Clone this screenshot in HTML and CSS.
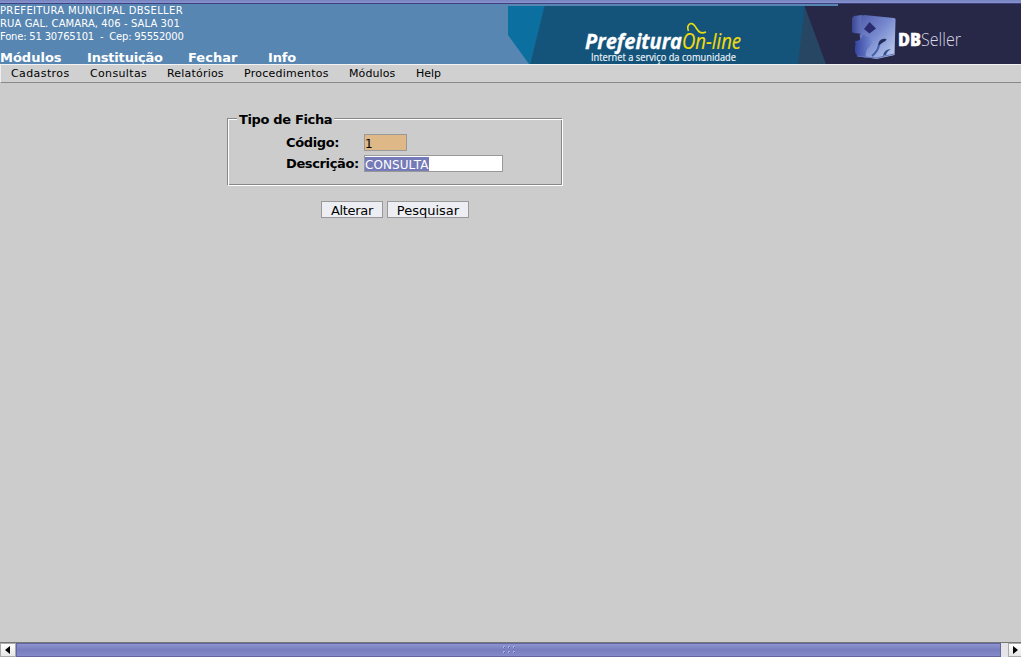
FILE: index.html
```html
<!DOCTYPE html>
<html lang="pt-BR">
<head>
<meta charset="utf-8">
<title>Prefeitura On-line</title>
<link rel="stylesheet" href="styles.css">
</head>
<body>
<div class="top-edge"></div>
<header class="header">
  <div class="account">
    <div class="address">
      <div class="l1">PREFEITURA MUNICIPAL DBSELLER</div>
      <div class="l2">RUA GAL. CAMARA, 406 - SALA 301</div>
      <div class="l3">Fone: 51 30765101 &nbsp;-&nbsp; Cep: 95552000</div>
    </div>
    <nav class="main-nav"><a class="n1">Módulos</a><a class="n2">Instituição</a><a class="n3">Fechar</a><a class="n4">Info</a></nav>
  </div>
  <svg class="banner" width="513" height="60" viewBox="508 4 513 60">
    <defs>
      <linearGradient id="cube" x1="0" y1="0" x2="1" y2="1"><stop offset="0" stop-color="#4d59a8"/><stop offset=".45" stop-color="#7587cd"/><stop offset="1" stop-color="#c3d4f2"/></linearGradient>
      <linearGradient id="arm" x1="0" y1="0" x2="1" y2="0"><stop offset="0" stop-color="#3c4794"/><stop offset="1" stop-color="#6675be"/></linearGradient>
      <linearGradient id="side" x1="0" y1="0" x2="1" y2="0"><stop offset="0" stop-color="#3444a0"/><stop offset="1" stop-color="#7c90d6"/></linearGradient>
    </defs>
    <path fill="#0b6fa0" d="M508 6h37l-15 58h-1L508 35z"/>
    <path fill="#14547b" d="M544.500 6H806l-4 58H530z"/>
    <path fill="#264663" d="M805 6l22 58h-29z"/>
    <path fill="#272748" d="M838 4h183v60H826L804.500 6H838z"/>
    <text class="brand" x="585" y="49" textLength="97" lengthAdjust="spacingAndGlyphs">Prefeitura</text>
    <text class="online" x="682" y="49" textLength="59" lengthAdjust="spacingAndGlyphs">On-line</text>
    <path fill="none" stroke="#f1dc0b" stroke-width="1.600" d="M688.500 31C686 25 691 21 694.500 25.500S699 35 706 32"/>
    <text class="tagline" x="591" y="61" textLength="145" lengthAdjust="spacingAndGlyphs">Internet a serviço da comunidade</text>
    <path fill="url(#arm)" d="M852 18l2-2 8-1v19l-8-1q-2 0-2-2z"/>
    <path fill="url(#cube)" d="M861 16l3-1 30 3q2 0 1.500 3l-1 34-18 4-18-3q-3-4 0-9 3-6 1-12 2-1 1.500-4z"/>
    <path fill="url(#side)" d="M855 41q6 0 8-6l6 2q4 2 5-2-1 9-6 13-3 4-2 10l-8-2q-4-3-3-8 1-4 0-7z"/>
    <path fill="#2b2b70" d="M869.500 22l6.500 6.500-6.500 5L864 29z"/>
    <path fill="#222d5a" d="M886.500 39q-6-1-8 4l-1 5q2-4 8-7z"/>
    <path fill="none" stroke="#4461a8" stroke-width="2" d="M879 45q-1 6-7 11"/>
    <path fill="#35508c" d="M891 49q-7 0-8 7l3-1q1-4 5-6z"/>
    <path fill="none" stroke="#6475bb" d="M857 56l19 2 18-4"/>
    <text class="db" x="898" y="46" textLength="23" lengthAdjust="spacingAndGlyphs">DB</text>
    <text class="seller" x="921" y="46" textLength="40" lengthAdjust="spacingAndGlyphs">Seller</text>
  </svg>
</header>
<nav class="menu"><a class="m1">Cadastros</a><a class="m2">Consultas</a><a class="m3">Relatórios</a><a class="m4">Procedimentos</a><a class="m5">Módulos</a><a class="m6">Help</a></nav>
<main class="content">
  <form class="form">
    <fieldset class="box">
      <legend class="legend">Tipo de Ficha</legend>
      <div class="row"><label class="label l-code">Código:</label><span class="field code">1</span></div>
      <div class="row"><label class="label l-desc">Descrição:</label><span class="field desc"><span class="selected">CONSULTA</span></span></div>
    </fieldset>
    <div class="actions"><button type="button" class="btn alter">Alterar</button><button type="button" class="btn search">Pesquisar</button></div>
  </form>
</main>
<div class="scrollbar">
  <span class="arrow"><svg width="5" height="8"><path d="M5 0v8L0 4z"/></svg></span>
  <span class="thumb"><svg width="14" height="8"><g fill="#a9b0e2"><path d="M1 0h2v2H1zM6 0h2v2H6zM11 0h2v2h-2zM1 5h2v2H1zM6 5h2v2H6zM11 5h2v2h-2z"/></g><path fill="#555aa0" d="M2 1h1v1H2zM7 1h1v1H7zM12 1h1v1h-1zM2 6h1v1H2zM7 6h1v1H7zM12 6h1v1h-1z"/></svg></span>
  <span class="track"></span>
  <span class="arrow right"><svg width="5" height="8"><path d="M0 0v8l5-4z"/></svg></span>
</div>
</body>
</html>
```

FILE: styles.css
```css
* { box-sizing: border-box; }
body { margin: 0; width: 1021px; height: 657px; overflow: hidden; display: flex; flex-direction: column; background: #ccc; color: #000; font-family: "DejaVu Sans", Verdana, sans-serif; }
.top-edge { height: 4px; flex: none; background: linear-gradient(#7683bf, #8794d0 75%, #404080 75%); }
.header { height: 60px; flex: none; display: flex; background: #5786b2; color: #fff; }
.account { width: 508px; display: flex; flex-direction: column; justify-content: space-between; }
.address { font-size: 10px; line-height: 13px; white-space: nowrap; }
.l1 { letter-spacing: 0.34px; }
.l2 { letter-spacing: 0.09px; }
.l3 { letter-spacing: -0.2px; }
.main-nav { display: flex; font-size: 13px; line-height: 15px; font-weight: bold; height: 14px; }
.main-nav a { white-space: nowrap; }
.n1 { width: 87px; }
.n2 { width: 101px; letter-spacing: -0.18px; }
.n3 { width: 80px; }
.n4 { letter-spacing: -0.2px; }
.banner { display: block; flex: none; }
.brand { font: italic 700 21px "Open Sans", sans-serif; fill: #fff; stroke: #fff; stroke-width: 0.3px; }
.online { font: italic 21px "Open Sans", sans-serif; fill: #f1dc0b; stroke: #f1dc0b; stroke-width: 0.2px; }
.tagline { font: 10px "Open Sans", sans-serif; fill: #f2f7fb; stroke: #f2f7fb; stroke-width: 0.15px; }
.db { font: 800 17px "Open Sans", sans-serif; fill: #fff; stroke: #fff; stroke-width: 0.4px; }
.seller { font: 300 18px "Open Sans", sans-serif; fill: #d7d7e5; }
.menu { height: 19px; flex: none; display: flex; padding-left: 10px; border-top: 1px solid #f2f2f2; border-left: 1px solid #eee; border-bottom: 1px solid #888; background: #d0d0d0; font-size: 11px; line-height: 17px; }
.m1 { width: 79px; letter-spacing: 0.4px; }
.m2 { width: 77px; letter-spacing: 0.35px; }
.m3 { width: 77px; letter-spacing: 0.2px; }
.m4 { width: 105px; letter-spacing: 0.25px; }
.m5 { width: 67px; letter-spacing: 0.1px; }
.content { flex: 1; padding: 29px 0 0 227px; }
.form { width: 336px; font-size: 13px; }
.box { margin: 0; height: 74px; padding: 9px 0 0 58px; border: 1px solid #888; border-right-color: #fff; border-bottom-color: #fff; box-shadow: inset 1px 1px #fff, inset -1px -1px #888; }
.legend { height: 13px; margin-left: -49px; padding: 0 2px; background: #ccc; font-weight: bold; line-height: 15px; letter-spacing: -0.35px; }
.row { display: flex; height: 21px; }
.label { width: 78px; font-weight: bold; line-height: 17px; white-space: nowrap; }
.l-code { letter-spacing: -0.35px; }
.l-desc { letter-spacing: -0.37px; }
.field { display: block; height: 17px; border: 1px solid #999; background: #fff; font-size: 12px; line-height: 18px; }
.code { width: 43px; background: #deb887; }
.desc { width: 139px; }
.selected { display: block; width: 64px; height: 14px; margin-top: 1px; background: #757ab8; color: #fff; line-height: 16px; letter-spacing: 0.08px; }
.actions { display: flex; gap: 4px; margin: 15px 0 0 94px; }
.btn { height: 17px; border: 1px solid #999; border-radius: 0; padding: 0; background: #edeef3; color: #000; font: 13px/17px "DejaVu Sans", sans-serif; }
.alter { width: 62px; letter-spacing: -0.3px; }
.search { width: 82px; }
.scrollbar { height: 15px; flex: none; display: flex; border-top: 1px solid #777; background: #eee; }
.arrow { width: 16px; display: flex; align-items: center; justify-content: center; padding-right: 2px; border: 1px solid #aaa; background: linear-gradient(#fff, #e6e6e6); }
.thumb { width: 985px; display: flex; align-items: center; justify-content: center; border: 1px solid #62659e; background: linear-gradient(#8d92d0, #787dbd 50%, #858ac9); }
.track { width: 7px; background: #e4e4e8; }
.right { width: 13px; padding: 0; border-right: 0; }
```
